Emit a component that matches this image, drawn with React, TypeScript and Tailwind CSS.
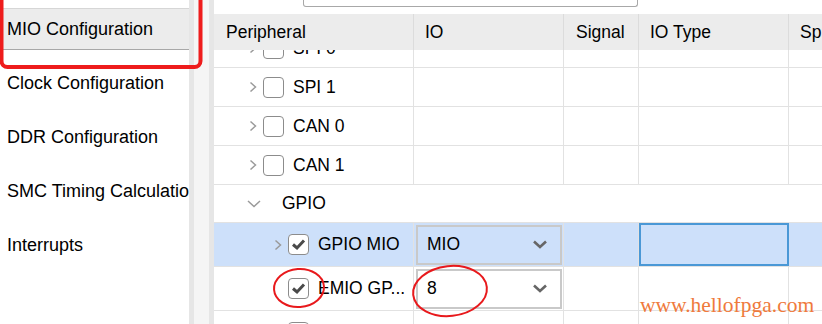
import React from "react"

const grid = "grid grid-cols-[200px_150px_75px_150px_1fr]"

function ChevronRight() {
  return (
    <svg width="8" height="12" viewBox="0 0 8 12" className="shrink-0">
      <polyline points="1.5,1.5 6.5,6 1.5,10.5" fill="none" stroke="#9a9a9a" strokeWidth="1.5" />
    </svg>
  )
}

function ChevronDown() {
  return (
    <svg width="14" height="8" viewBox="0 0 14 8" className="shrink-0">
      <polyline points="1,1 7,6.5 13,1" fill="none" stroke="#9a9a9a" strokeWidth="1.5" />
    </svg>
  )
}

function Checkbox({ checked }: { checked?: boolean }) {
  return (
    <div className="w-[21px] h-[21px] shrink-0 rounded-[4px] border-[1.5px] border-[#8c8c8c] bg-white flex items-center justify-center">
      {checked && (
        <svg width="15" height="13" viewBox="0 0 15 13">
          <polyline points="2,6.5 6,10 13,2.5" fill="none" stroke="#4a4a4a" strokeWidth="3" />
        </svg>
      )}
    </div>
  )
}

function Combo({ value }: { value: string }) {
  return (
    <div className="ml-[2px] w-[146px] h-[40px] border-2 border-[#c9c9c9] flex items-center justify-between pl-[9px] pr-[12px]">
      <span>{value}</span>
      <svg width="16" height="9" viewBox="0 0 16 9">
        <polyline points="2,1.5 8,7 14,1.5" fill="none" stroke="#666" strokeWidth="2.6" />
      </svg>
    </div>
  )
}

type Row = {
  name: string
  level: 1 | 2
  chevron?: boolean
  checked?: boolean
  io?: string
  selected?: boolean
  tall?: boolean
}

const rows: Row[] = [
  { name: "SPI 0", level: 1, chevron: true },
  { name: "SPI 1", level: 1, chevron: true },
  { name: "CAN 0", level: 1, chevron: true },
  { name: "CAN 1", level: 1, chevron: true },
]

const sideItems = ["Clock Configuration", "DDR Configuration", "SMC Timing Calculation", "Interrupts"]

function PeriphRow({ row }: { row: Row }) {
  const cell = "border-r border-[#e2e2e2]"
  return (
    <div className={`${grid} ${row.tall ? "h-[44px]" : "h-[39px]"} border-b border-[#e2e2e2] ${row.selected ? "bg-[#cde0fa]" : ""}`}>
      <div className={`${cell} flex items-center ${row.level === 1 ? "pl-[35px]" : "pl-[60px]"}`}>
        <div className="w-[14px] shrink-0">{row.chevron && <ChevronRight />}</div>
        <Checkbox checked={row.checked} />
        <span className="ml-[9px] whitespace-nowrap">{row.name}</span>
      </div>
      <div className={`${cell} flex items-center`}>{row.io && <Combo value={row.io} />}</div>
      <div className={cell} />
      <div className={row.selected ? "border-2 border-[#4a98d6]" : cell} />
      <div />
    </div>
  )
}

export default function App() {
  return (
    <div className="relative w-[822px] h-[324px] overflow-hidden bg-white flex text-black text-[17.5px] font-['Liberation_Sans',Arial,sans-serif]">
      {/* left nav */}
      <div className="w-[189px] shrink-0 pt-[8px] overflow-hidden whitespace-nowrap text-[18px]">
        <div className="h-[42px] bg-[#ececec] border-t border-[#d6d6d6] border-b border-b-[#a8a8a8] flex items-center pl-[7px]">
          MIO Configuration
        </div>
        <div className="mt-[6px]">
          {sideItems.map((s) => (
            <div key={s} className="h-[54px] flex items-center pl-[7px]">
              {s}
            </div>
          ))}
        </div>
      </div>

      {/* splitter */}
      <div className="w-[5px] shrink-0 bg-[#e6e6e6]" />
      <div className="w-[15px] shrink-0 bg-[#f5f5f5]" />
      <div className="w-[5px] shrink-0 bg-[#e6e6e6]" />

      {/* table */}
      <div className="flex-1 flex flex-col min-w-0">
        <div className="h-[14px] shrink-0">
          <div className="ml-[89px] w-[335px] h-[7px] border-x border-b border-[#a8a8a8] rounded-b-[3px]" />
        </div>
        <div className={`${grid} h-[36px] shrink-0 bg-[#ececec] relative z-10`}>
          <div className="border-r border-[#dcdcdc] flex items-center pl-[12px]">Peripheral</div>
          <div className="border-r border-[#dcdcdc] flex items-center pl-[11px]">IO</div>
          <div className="border-r border-[#dcdcdc] flex items-center pl-[12px]">Signal</div>
          <div className="border-r border-[#dcdcdc] flex items-center pl-[11px]">IO Type</div>
          <div className="flex items-center pl-[11px]">Sp</div>
        </div>
        <div className="flex-1 overflow-hidden">
          <div className="-mt-[21px]">
            {rows.map((r) => (
              <PeriphRow key={r.name} row={r} />
            ))}
            <div className="h-[38px] border-b border-[#e2e2e2] flex items-center pl-[33px]">
              <div className="w-[35px] shrink-0">
                <ChevronDown />
              </div>
              <span>GPIO</span>
            </div>
            <PeriphRow row={{ name: "GPIO MIO", level: 2, chevron: true, checked: true, io: "MIO", selected: true, tall: true }} />
            <PeriphRow row={{ name: "EMIO GP...", level: 2, checked: true, io: "8", tall: true }} />
            <PeriphRow row={{ name: "", level: 2, tall: true }} />
          </div>
        </div>
      </div>

      {/* watermark */}
      <div className="absolute left-[640px] top-[295px] text-[21.5px] leading-none text-[#ef7a3c] font-['Liberation_Serif','Times_New_Roman',serif]">
        www.hellofpga.com
      </div>

      {/* red annotations */}
      <svg className="absolute left-0 top-0 pointer-events-none" width="822" height="324">
        <rect x="1.5" y="-10" width="199" height="77" rx="6" fill="none" stroke="#ee1c1c" strokeWidth="4" />
        <ellipse cx="299" cy="288" rx="25" ry="19" fill="none" stroke="#e8191c" strokeWidth="2" transform="rotate(-4 299 288)" />
        <ellipse cx="450" cy="291" rx="37" ry="25" fill="none" stroke="#e8191c" strokeWidth="2" transform="rotate(-6 450 291)" />
      </svg>
    </div>
  )
}
